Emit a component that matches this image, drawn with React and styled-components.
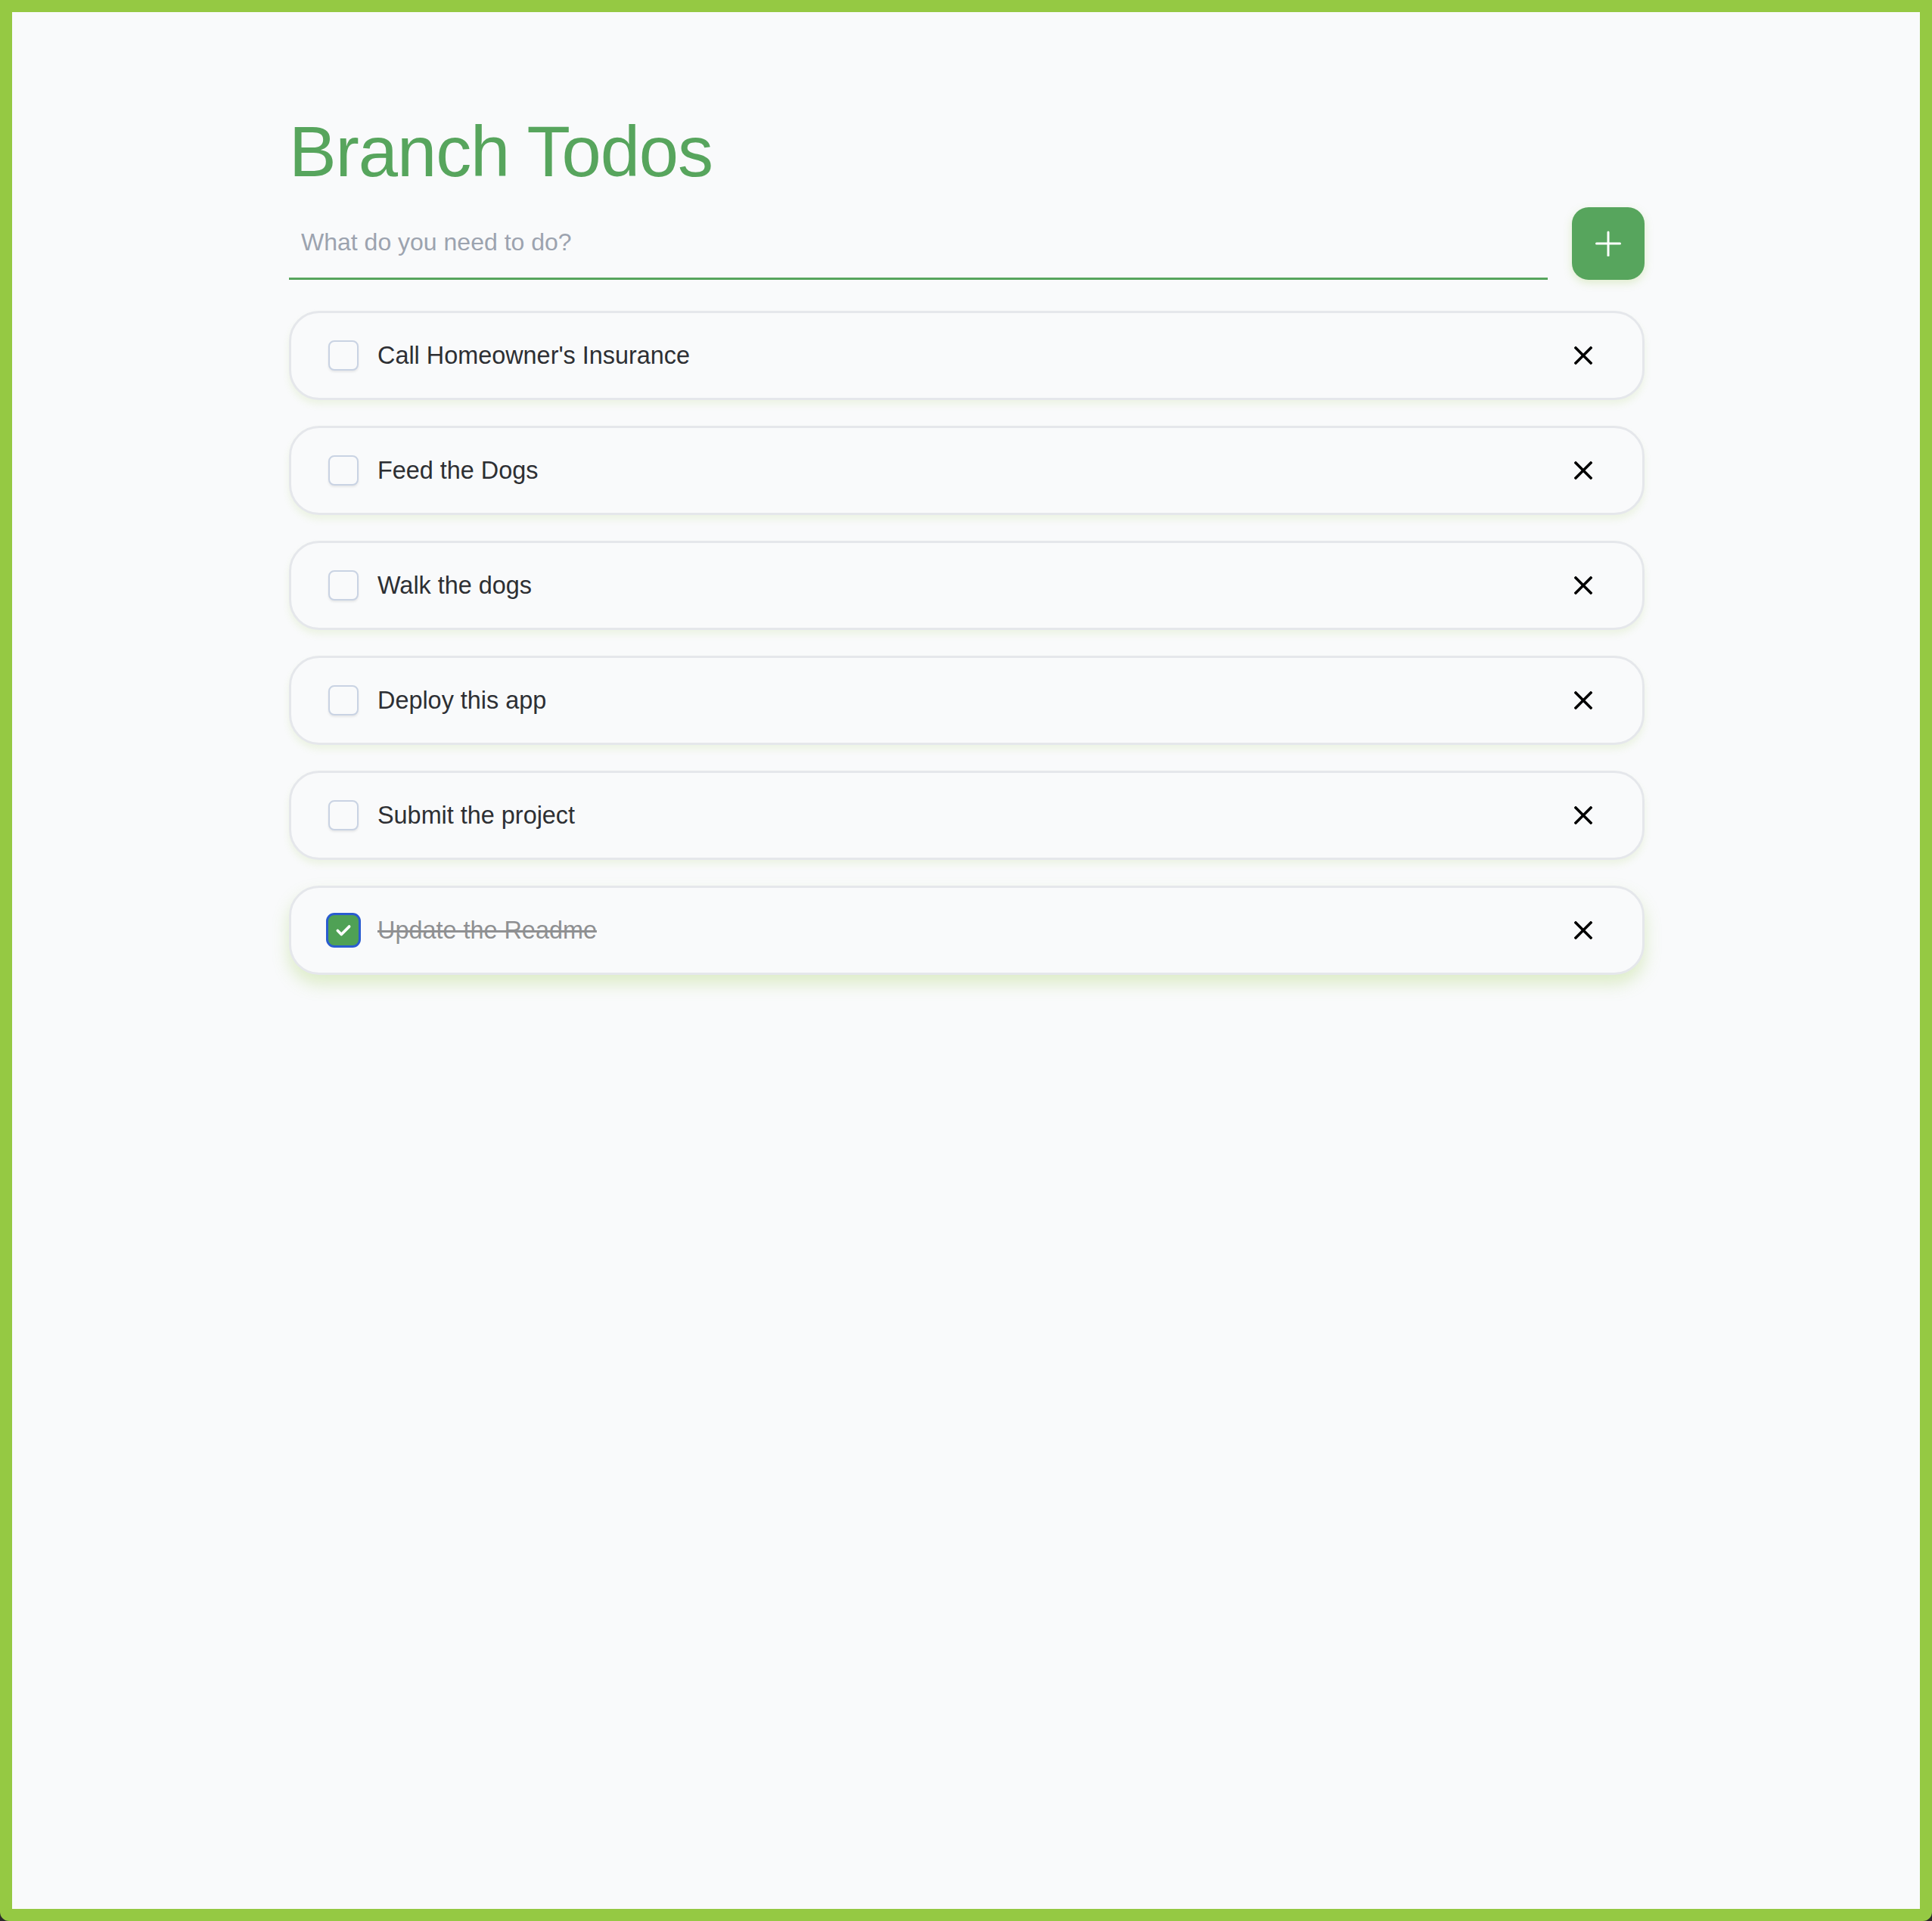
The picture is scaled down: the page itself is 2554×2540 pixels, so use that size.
import React, { useState } from 'react'
import styled, { createGlobalStyle } from 'styled-components'

const GlobalStyle = createGlobalStyle`
  * { box-sizing: border-box; }
  body {
    margin: 0;
    background: #2b2b2b;
    font-family: "Liberation Sans", Arial, sans-serif;
  }
`

const Frame = styled.div`
  min-height: 2540px;
  border: 16px solid #95c943;
  border-radius: 0 0 12px 12px;
  background: #f9fafb;
`

const Main = styled.main`
  max-width: 1794px;
  margin: 0 auto;
  padding: 131px 0 0 2px;
`

const Title = styled.h1`
  margin: 0;
  font-size: 94px;
  font-weight: 400;
  letter-spacing: -1.1px;
  color: #57a55d;
`

const Form = styled.form`
  display: flex;
  gap: 32px;
  margin-top: 19px;
`

const Input = styled.input`
  flex: 1;
  height: 96px;
  padding: 0 16px;
  border: none;
  border-bottom: 3px solid #57a55d;
  background: transparent;
  font-family: inherit;
  font-size: 32px;
  color: #2d2f33;
  outline: none;

  &::placeholder {
    color: #9ca3af;
  }
`

const AddButton = styled.button`
  width: 96px;
  height: 96px;
  display: flex;
  align-items: center;
  justify-content: center;
  border: none;
  border-radius: 22px;
  background: #57a55d;
  box-shadow: 0 4px 12px rgba(149, 201, 67, 0.25);
  cursor: pointer;
`

const List = styled.ul`
  list-style: none;
  margin: 41px 0 0;
  padding: 0;
  display: flex;
  flex-direction: column;
  gap: 34px;
`

const Row = styled.li`
  height: 118px;
  display: flex;
  align-items: center;
  gap: 25px;
  padding: 0 54px 0 49px;
  border: 3px solid #e5e7eb;
  border-radius: 40px;
  background: #f9fafb;
  box-shadow: ${p => p.$lifted
    ? '0 12px 22px rgba(149, 201, 67, 0.28)'
    : '0 6px 10px rgba(149, 201, 67, 0.12)'};
`

const Box = styled.button`
  flex: none;
  width: 40px;
  height: 40px;
  display: flex;
  align-items: center;
  justify-content: center;
  padding: 0;
  border: 2px solid ${p => p.$checked ? '#4fa155' : '#c9d3e3'};
  border-radius: 8px;
  background: ${p => p.$checked ? '#4fa155' : '#f9fafb'};
  box-shadow: ${p => p.$checked ? '0 0 0 3px #2a5cd0' : '0 2px 3px rgba(0, 0, 0, 0.08)'};
  cursor: pointer;
`

const Label = styled.span`
  flex: 1;
  font-size: 32.4px;
  color: ${p => p.$done ? '#8f9092' : '#2d2f33'};
  text-decoration: ${p => p.$done ? 'line-through' : 'none'};
  text-decoration-thickness: 3px;
`

const Remove = styled.button`
  flex: none;
  width: 48px;
  height: 48px;
  display: flex;
  align-items: center;
  justify-content: center;
  padding: 0;
  border: none;
  background: transparent;
  cursor: pointer;
`

const PlusIcon = () => (
  <svg width="34" height="34" viewBox="0 0 34 34" fill="none">
    <path d="M17 2v31M1.5 17h31" stroke="#fff" strokeWidth="3" strokeLinecap="round" />
  </svg>
)

const CrossIcon = () => (
  <svg width="24" height="24" viewBox="0 0 24 24" fill="none">
    <path d="M2 2l20 20M22 2L2 22" stroke="#000" strokeWidth="3.6" strokeLinecap="square" />
  </svg>
)

const CheckIcon = () => (
  <svg width="24" height="24" viewBox="0 0 22 22" fill="none">
    <path d="M4 11.5l4.5 4.5L18 6.5" stroke="#fff" strokeWidth="3.4" strokeLinecap="round" strokeLinejoin="round" />
  </svg>
)

const initialTodos = [
  { id: 1, text: "Call Homeowner's Insurance", done: false },
  { id: 2, text: 'Feed the Dogs', done: false },
  { id: 3, text: 'Walk the dogs', done: false },
  { id: 4, text: 'Deploy this app', done: false },
  { id: 5, text: 'Submit the project', done: false },
  { id: 6, text: 'Update the Readme', done: true },
]

export default function App() {
  const [todos, setTodos] = useState(initialTodos)

  const toggle = id =>
    setTodos(todos.map(t => (t.id === id ? { ...t, done: !t.done } : t)))

  return (
    <>
      <GlobalStyle />
      <Frame>
        <Main>
          <Title>Branch Todos</Title>
          <Form onSubmit={e => e.preventDefault()}>
            <Input placeholder="What do you need to do?" />
            <AddButton type="submit" aria-label="Add todo">
              <PlusIcon />
            </AddButton>
          </Form>
          <List>
            {todos.map(todo => (
              <Row key={todo.id} $lifted={todo.done}>
                <Box $checked={todo.done} onClick={() => toggle(todo.id)}>
                  {todo.done && <CheckIcon />}
                </Box>
                <Label $done={todo.done}>{todo.text}</Label>
                <Remove aria-label="Delete">
                  <CrossIcon />
                </Remove>
              </Row>
            ))}
          </List>
        </Main>
      </Frame>
    </>
  )
}
